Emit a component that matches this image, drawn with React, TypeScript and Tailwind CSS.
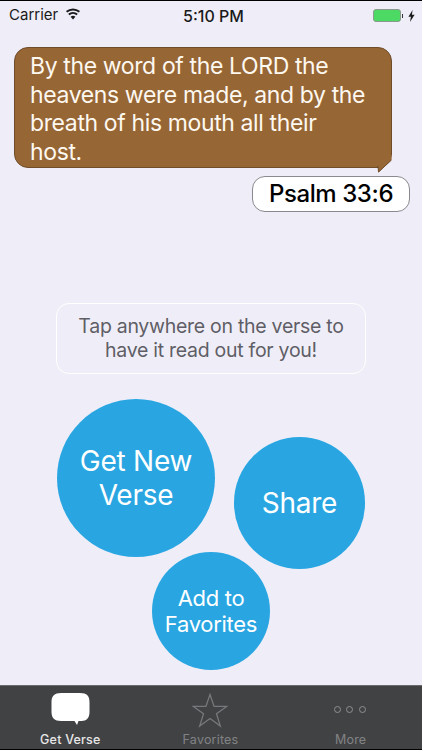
import React from 'react';

const font = { fontFamily: 'Inter, sans-serif' };

const Wifi = () => (
  <svg width="16" height="12" viewBox="0 0 16 12" fill="#1a1a1a">
    <path d="M8 11.6 5.6 8.7a3.6 3.6 0 0 1 4.8 0L8 11.6Z" />
    <path d="M4.400 7.300 3.200 5.800a7.400 7.400 0 0 1 9.600 0l-1.200 1.500a5.500 5.500 0 0 0-7.200 0Z" />
    <path d="M2.200 4.600 1 3.100a10.800 10.800 0 0 1 14 0l-1.200 1.500a8.900 8.900 0 0 0-11.600 0Z" />
  </svg>
);

const Battery = () => (
  <div className="flex items-center gap-[1px]">
    <div className="w-[28px] h-[13px] rounded-[3px] border border-[#8a9a8c] bg-[#4cd964]" />
    <div className="w-[1.5px] h-[4px] bg-[#333]" />
  </div>
);

const Bolt = () => (
  <svg width="7" height="12" viewBox="0 0 7 12" fill="#1a1a1a">
    <path d="M4.600 0 .4 6.800h2.500L2 12l4.600-7.200H3.900L4.600 0Z" />
  </svg>
);

const BubbleIcon = () => (
  <svg width="39" height="33" viewBox="0 0 39 33" fill="#fff">
    <path d="M10 0h19c7 0 9.500 3 9.500 9v10c0 6-3 9-8 9h-3l-1.500 4-2.500-4H10C3.500 28 .5 25 .5 19V9C.5 3 3.500 0 10 0Z" />
  </svg>
);

const Star = () => (
  <svg width="36" height="35" viewBox="0 0 36 35" fill="none" stroke="#77787b" strokeWidth="1.300">
    <path d="M18 1.500 22.100 13.400H34.600L24.500 20.800 28.300 33 18 25.500 7.700 33 11.500 20.800 1.400 13.400H13.900L18 1.500Z" />
  </svg>
);

const Dots = () => (
  <div className="flex gap-[5.500px] h-[35px] items-center pb-[3px] mr-[2px]">
    <div className="w-[7px] h-[7px] rounded-full border border-[#8e8f92]" />
    <div className="w-[7px] h-[7px] rounded-full border border-[#8e8f92]" />
    <div className="w-[7px] h-[7px] rounded-full border border-[#8e8f92]" />
  </div>
);

export default function App() {
  return (
    <div style={font} className="w-[422px] h-[750px] flex flex-col bg-[#efeef8] overflow-hidden">
      <div className="h-[1px] bg-black" />

      {/* status bar */}
      <div className="relative h-[29px] flex items-center pl-[9px] pr-[7px] text-[15px] text-[#1a1a1a]">
        <span>Carrier</span>
        <span className="ml-[7px] mb-[3px]"><Wifi /></span>
        <span className="absolute left-0 right-0 pl-[5px] text-center text-[16px] font-medium">5:10 PM</span>
        <div className="ml-auto flex items-center gap-[5px]">
          <Battery />
          <Bolt />
        </div>
      </div>

      {/* verse bubble */}
      <div className="relative ml-[14px] mt-[17px] w-[378px] h-[121px] rounded-[14px] border border-[#6f4d2b] bg-[#976635] pl-[15px] pt-[4px] text-[23px] leading-[28.500px] tracking-[-0.38px] text-[#fdf8f0]">
        <p>By the word of the LORD the</p>
        <p>heavens were made, and by the</p>
        <p>breath of his mouth all their</p>
        <p>host.</p>
        <svg className="absolute right-[-1px] bottom-[-6px]" width="15" height="18" viewBox="0 0 15 18">
          <path d="M0 11 1 11.500 1.500 17.500 14.500 5 14.500 0 0 0Z" fill="#976635" />
          <path d="M0 11.500H1L1.500 17 14.500 5" fill="none" stroke="#6f4d2b" strokeWidth="1" />
        </svg>
      </div>

      {/* reference pill */}
      <div className="ml-[252px] mt-[8px] w-[158px] h-[36px] rounded-[13px] border border-[#8a8a8e] bg-white flex items-center justify-center text-[24px] font-medium tracking-[-0.4px] text-black">
        Psalm 33:6
      </div>

      {/* hint */}
      <div className="ml-[56px] mt-[91px] w-[310px] h-[71px] rounded-[13px] border border-white flex flex-col items-center justify-center text-[19.500px] leading-[23.500px] tracking-[-0.28px] text-[#5f5e66]">
        <p>Tap anywhere on the verse to</p>
        <p>have it read out for you!</p>
      </div>

      {/* buttons */}
      <div className="ml-[57px] mt-[25px] flex gap-[19px] items-start">
        <button className="w-[158px] h-[158px] rounded-full bg-[#29a6e2] text-white text-[28px] leading-[34px] tracking-[-0.25px]">
          Get New<br />Verse
        </button>
        <button className="mt-[38px] w-[131px] h-[132px] rounded-full bg-[#29a6e2] text-white text-[28px] tracking-[-0.25px]">
          Share
        </button>
      </div>
      <button className="ml-[152px] mt-[-17px] w-[118px] h-[118px] rounded-full bg-[#29a6e2] text-white text-[22px] leading-[26px] tracking-[-0.3px]">
        Add to<br />Favorites
      </button>

      {/* tab bar */}
      <div className="mt-[15px] flex-1 border-t border-[#6a6a6c] bg-[#414244] grid grid-cols-3 border-b border-b-black">
        <div className="flex flex-col items-center pt-[7px]">
          <BubbleIcon />
          <span className="mt-[6px] text-[12.500px] leading-[15px] font-medium tracking-[0.2px] text-[#e8e8e8]">Get Verse</span>
        </div>
        <div className="flex flex-col items-center pt-[7px] pr-[1px]">
          <Star />
          <span className="mt-[4px] text-[12.500px] leading-[15px] tracking-[0.2px] text-[#818285]">Favorites</span>
        </div>
        <div className="flex flex-col items-center pt-[7px] pr-[2px]">
          <Dots />
          <span className="mt-[4px] text-[12.500px] leading-[15px] tracking-[0.2px] text-[#818285]">More</span>
        </div>
      </div>
    </div>
  );
}
